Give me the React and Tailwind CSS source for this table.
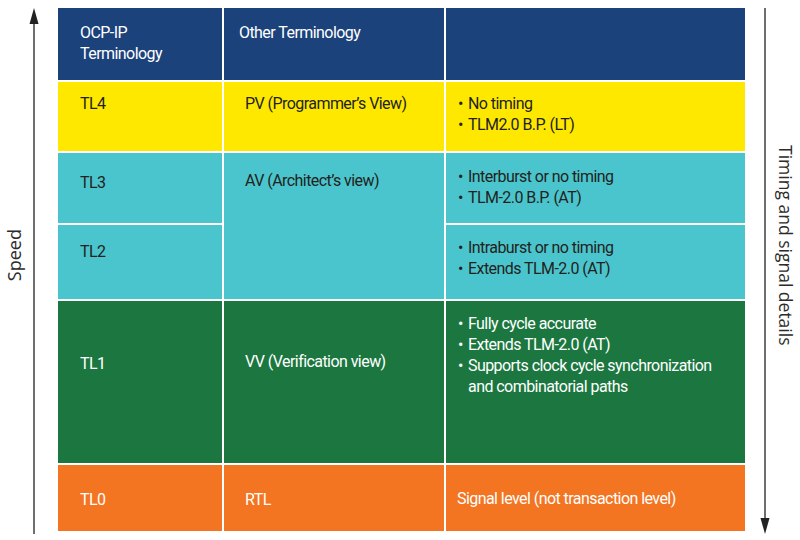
const font = { fontFamily: 'Roboto, "Liberation Sans", sans-serif' }

function Bullets({ items }) {
  return (
    <div className="flex flex-col">
      {items.map(t => (
        <div key={t} className="flex">
          <span className="w-[10px] shrink-0">•</span>
          <span className="whitespace-pre-line">{t}</span>
        </div>
      ))}
    </div>
  )
}

export default function App() {
  return (
    <div className="w-[800px] h-[540px] bg-white flex pt-[8px] text-[16px] leading-[21px] tracking-[-0.035em]" style={font}>
      {/* speed axis */}
      <div className="w-[58px] flex h-[526px]">
        <div className="w-[28px] flex items-center justify-center pb-[32px]">
          <span className="[writing-mode:vertical-rl] rotate-180 text-[18px] text-[#2b2b2b] tracking-normal" style={{ fontFamily: '"Open Sans", sans-serif' }}>Speed</span>
        </div>
        <svg width="12" height="526" viewBox="0 0 12 526">
          <line x1="6" y1="10" x2="6" y2="526" stroke="#4a4a4a" strokeWidth="1.6" />
          <polygon points="6,0 1.5,16 10.5,16" fill="#222" />
        </svg>
      </div>

      <div className="grid grid-cols-[164px_220px_299px] grid-rows-[72px_69px_70px_74px_162px_66px] gap-[2px] bg-white h-[523px]">
        <div className="bg-[#1c427c] text-white pl-[22px] pt-[14px]">OCP-IP<br />Terminology</div>
        <div className="bg-[#1c427c] text-white pl-[15px] pt-[14px]">Other Terminology</div>
        <div className="bg-[#1c427c]" />

        <div className="bg-[#ffe800] text-[#231f20] pl-[22px] pt-[11px]">TL4</div>
        <div className="bg-[#ffe800] text-[#231f20] pl-[21px] pt-[11px]">PV (Programmer’s View)</div>
        <div className="bg-[#ffe800] text-[#231f20] pl-[12px] pt-[11px]"><Bullets items={['No timing', 'TLM2.0 B.P. (LT)']} /></div>

        <div className="bg-[#4ac5cd] text-[#231f20] pl-[22px] pt-[19px]">TL3</div>
        <div className="row-span-2 bg-[#4ac5cd] text-[#231f20] pl-[21px] pt-[17px]">AV (Architect’s view)</div>
        <div className="bg-[#4ac5cd] text-[#231f20] pl-[12px] pt-[13px]"><Bullets items={['Interburst or no timing', 'TLM-2.0 B.P. (AT)']} /></div>

        <div className="bg-[#4ac5cd] text-[#231f20] pl-[22px] pt-[16px]">TL2</div>
        <div className="bg-[#4ac5cd] text-[#231f20] pl-[12px] pt-[12px]"><Bullets items={['Intraburst or no timing', 'Extends TLM-2.0 (AT)']} /></div>

        <div className="bg-[#1b773f] text-white pl-[22px] pt-[52px]">TL1</div>
        <div className="bg-[#1b773f] text-white pl-[21px] pt-[50px]">VV (Verification view)</div>
        <div className="bg-[#1b773f] text-white pl-[12px] pt-[12px]">
          <Bullets items={['Fully cycle accurate', 'Extends TLM-2.0 (AT)', 'Supports clock cycle synchronization\nand combinatorial paths']} />
        </div>

        <div className="bg-[#f37421] text-white pl-[22px] pt-[24px]">TL0</div>
        <div className="bg-[#f37421] text-white pl-[21px] pt-[24px]">RTL</div>
        <div className="bg-[#f37421] text-white pl-[11px] pt-[23px]">Signal level (not transaction level)</div>
      </div>

      {/* timing axis */}
      <div className="flex h-[526px] pl-[15px]">
        <svg width="10" height="526" viewBox="0 0 10 526">
          <line x1="5" y1="0" x2="5" y2="512" stroke="#4a4a4a" strokeWidth="1.6" />
          <polygon points="5,526 0.5,510 9.5,510" fill="#222" />
        </svg>
        <div className="w-[30px] flex items-center justify-center pb-[52px]">
          <span className="[writing-mode:vertical-rl] text-[17.5px] text-[#2b2b2b] tracking-normal whitespace-nowrap" style={{ fontFamily: '"Open Sans", sans-serif' }}>Timing and signal details</span>
        </div>
      </div>
    </div>
  )
}
